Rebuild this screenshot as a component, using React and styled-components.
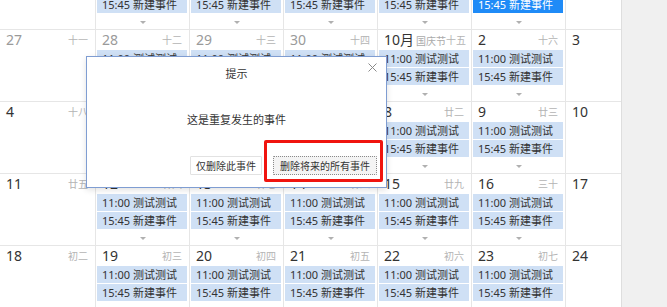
import styled, { createGlobalStyle } from "styled-components";

const GlobalStyle = createGlobalStyle`
  html, body {
    margin: 0;
    padding: 0;
    background: #f0f0f0;
    font-family: "Noto Sans", "Noto Sans CJK SC", sans-serif;
    color: #333;
  }
  #root {
    height: 307px;
    overflow: hidden;
  }
`;

const weeks = [
  {
    days: [
      { n: "20", l: "初四" },
      { n: "21", l: "初五", ev: true },
      { n: "22", l: "初六", ev: true },
      { n: "23", l: "初七", ev: true },
      { n: "24", l: "初八", ev: true },
      { n: "25", l: "初九", ev: true, active: true },
      { n: "26", l: "初十" },
    ],
  },
  {
    days: [
      { n: "27", l: "十一", muted: true },
      { n: "28", l: "十二", muted: true, ev: true },
      { n: "29", l: "十三", muted: true, ev: true },
      { n: "30", l: "十四", muted: true, ev: true },
      { n: "10月", l: "十五", fest: "国庆节", ev: true },
      { n: "2", l: "十六", ev: true },
      { n: "3", l: "十七" },
    ],
  },
  {
    days: [
      { n: "4", l: "十八" },
      { n: "5", l: "十九", ev: true },
      { n: "6", l: "二十", ev: true },
      { n: "7", l: "廿一", ev: true },
      { n: "8", l: "廿二", ev: true },
      { n: "9", l: "廿三", ev: true },
      { n: "10", l: "廿四" },
    ],
  },
  {
    days: [
      { n: "11", l: "廿五" },
      { n: "12", l: "廿六", ev: true },
      { n: "13", l: "廿七", ev: true },
      { n: "14", l: "廿八", ev: true },
      { n: "15", l: "廿九", ev: true },
      { n: "16", l: "三十", ev: true },
      { n: "17", l: "初一" },
    ],
  },
  {
    days: [
      { n: "18", l: "初二" },
      { n: "19", l: "初三", ev: true },
      { n: "20", l: "初四", ev: true },
      { n: "21", l: "初五", ev: true },
      { n: "22", l: "初六", ev: true },
      { n: "23", l: "初七", ev: true },
      { n: "24", l: "初八" },
    ],
  },
];

export default function App() {
  return (
    <>
      <GlobalStyle />
      <Page>
        <Calendar>
          {weeks.map((w, i) => (
            <Week key={i}>
              {w.days.map((d, j) => (
                <Day key={j}>
                  <DayHead>
                    <DateNum $muted={d.muted}>
                      {d.n}
                      {d.fest && <Festival>{d.fest}</Festival>}
                    </DateNum>
                    <Lunar>{d.l}</Lunar>
                  </DayHead>
                  {d.ev && (
                    <>
                      <Chip>11:00 测试测试</Chip>
                      <Chip $active={d.active}>15:45 新建事件</Chip>
                      <More>
                        <Caret />
                      </More>
                    </>
                  )}
                </Day>
              ))}
            </Week>
          ))}
        </Calendar>

        <Dialog>
          <DialogHead>
            <Title>提示</Title>
            <Close aria-label="close">
              <svg width="9" height="9" viewBox="0 0 9 9">
                <path d="M0.5 0.5 L8.5 8.5 M8.5 0.5 L0.5 8.5" stroke="#8a8a8a" strokeWidth="1" />
              </svg>
            </Close>
          </DialogHead>
          <Message>这是重复发生的事件</Message>
          <Footer>
            <Button>仅删除此事件</Button>
            <Button $focused>删除将来的所有事件</Button>
          </Footer>
        </Dialog>
        <Highlight />
      </Page>
    </>
  );
}

const Page = styled.div`
  position: relative;
  height: 307px;
  overflow: hidden;
`;

const Calendar = styled.div`
  width: 621px;
  height: 360px;
  margin-top: -42px;
  background: #fff;
  border-right: 1px solid #dedede;
  overflow: hidden;
`;

const Week = styled.div`
  display: grid;
  grid-template-columns: 96px repeat(6, 94px);
  height: 71px;
  border-bottom: 1px solid #e6e6e6;
`;

const Day = styled.div`
  display: flex;
  flex-direction: column;
  border-right: 1px solid #e6e6e6;
  min-width: 0;
`;

const DayHead = styled.div`
  display: flex;
  align-items: center;
  justify-content: space-between;
  height: 20px;
  padding: 0 7px 0 6px;
  flex-shrink: 0;
  white-space: nowrap;
`;

const DateNum = styled.span`
  display: flex;
  align-items: baseline;
  gap: 2px;
  font-size: 14px;
  line-height: 20px;
  white-space: nowrap;
  flex-shrink: 0;
  color: ${(p) => (p.$muted ? "#9a9a9a" : "#333")};
`;

const Festival = styled.span`
  font-size: 10px;
  color: #aaa;
`;

const Lunar = styled.span`
  font-size: 10px;
  line-height: 20px;
  flex-shrink: 0;
  color: #b4b4b4;
`;

const Chip = styled.div`
  height: 17px;
  line-height: 17px;
  margin: 0 2px 1px 1px;
  padding-left: 5px;
  font-size: 11px;
  white-space: nowrap;
  overflow: hidden;
  background: ${(p) => (p.$active ? "#1f8bf7" : "#cfe0f5")};
  color: ${(p) => (p.$active ? "#fff" : "#333")};
`;

const More = styled.div`
  flex: 1;
  display: flex;
  align-items: center;
  justify-content: center;
  padding-top: 2px;
`;

const Caret = styled.span`
  width: 0;
  height: 0;
  border-left: 3px solid transparent;
  border-right: 3px solid transparent;
  border-top: 3px solid #b0b0b0;
`;

const Dialog = styled.div`
  position: absolute;
  left: 86px;
  top: 56px;
  width: 299px;
  height: 130px;
  display: flex;
  flex-direction: column;
  background: #fff;
  border: 1px solid #7f9dd2;
  box-shadow: 0 2px 6px rgba(0, 0, 0, 0.12);
`;

const DialogHead = styled.div`
  position: relative;
  height: 32px;
  display: flex;
  align-items: center;
  justify-content: center;
`;

const Title = styled.span`
  font-size: 11px;
  color: #333;
`;

const Close = styled.span`
  position: absolute;
  right: 9px;
  top: 6px;
  display: flex;
`;

const Message = styled.div`
  padding: 22px 0 27px;
  text-align: center;
  font-size: 11px;
  line-height: 18px;
  color: #333;
`;

const Footer = styled.div`
  display: flex;
  justify-content: flex-end;
  gap: 11px;
  padding-right: 9px;
`;

const Button = styled.button`
  height: 19px;
  padding: 0 ${(p) => (p.$focused ? "6px" : "5px")};
  font-family: inherit;
  font-size: 10px;
  color: #333;
  background: ${(p) => (p.$focused ? "#f4f4f4" : "#fff")};
  border: 1px ${(p) => (p.$focused ? "dotted #8a8a8a" : "solid #e2e2e2")};
  border-radius: 1px;
`;

const Highlight = styled.div`
  position: absolute;
  left: 264px;
  top: 140px;
  width: 113px;
  height: 36px;
  border: 3px solid #f0140f;
  border-radius: 2px;
  pointer-events: none;
`;
